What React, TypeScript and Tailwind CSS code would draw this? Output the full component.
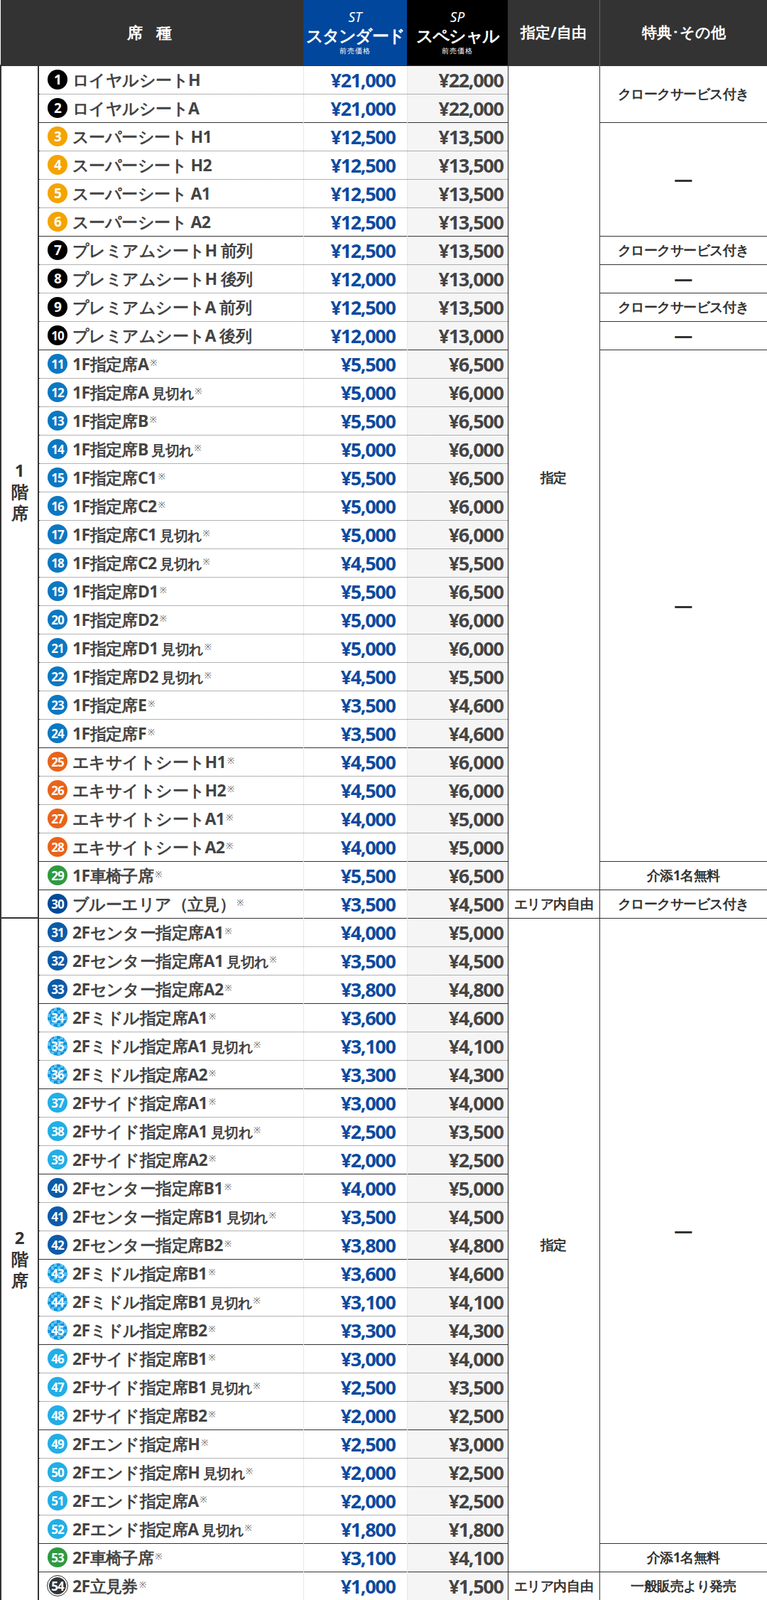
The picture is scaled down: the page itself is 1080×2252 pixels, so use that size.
type Row = { n: number; name: string; sub?: string; st: string; sp: string; c: string; g?: boolean };

const BK = "bg-black";
const OR = "bg-[#f4a400]";
const MB = "bg-[#0b78c2]";
const RD = "bg-[#e8641a]";
const GR = "bg-[#2e9a3f]";
const DB = "bg-[#0c5ba8]";
const CK = "bg-[repeating-conic-gradient(#1592dc_0_25%,#5cc4f2_0_50%)] bg-[length:9px_9px]";
const CY = "bg-[#22aee6]";

const rows: Row[] = [
  { n: 1, name: "ロイヤルシートH", st: "21,000", sp: "22,000", c: BK, g: true },
  { n: 2, name: "ロイヤルシートA", st: "21,000", sp: "22,000", c: BK },
  { n: 3, name: "スーパーシート H1", st: "12,500", sp: "13,500", c: OR, g: true },
  { n: 4, name: "スーパーシート H2", st: "12,500", sp: "13,500", c: OR },
  { n: 5, name: "スーパーシート A1", st: "12,500", sp: "13,500", c: OR },
  { n: 6, name: "スーパーシート A2", st: "12,500", sp: "13,500", c: OR },
  { n: 7, name: "プレミアムシートH 前列", st: "12,500", sp: "13,500", c: BK, g: true },
  { n: 8, name: "プレミアムシートH 後列", st: "12,000", sp: "13,000", c: BK },
  { n: 9, name: "プレミアムシートA 前列", st: "12,500", sp: "13,500", c: BK },
  { n: 10, name: "プレミアムシートA 後列", st: "12,000", sp: "13,000", c: BK },
  { n: 11, name: "1F指定席A", sub: "", st: "5,500", sp: "6,500", c: MB, g: true },
  { n: 12, name: "1F指定席A 見切れ", sub: "", st: "5,000", sp: "6,000", c: MB },
  { n: 13, name: "1F指定席B", sub: "", st: "5,500", sp: "6,500", c: MB },
  { n: 14, name: "1F指定席B 見切れ", sub: "", st: "5,000", sp: "6,000", c: MB },
  { n: 15, name: "1F指定席C1", sub: "", st: "5,500", sp: "6,500", c: MB },
  { n: 16, name: "1F指定席C2", sub: "", st: "5,000", sp: "6,000", c: MB },
  { n: 17, name: "1F指定席C1 見切れ", sub: "", st: "5,000", sp: "6,000", c: MB },
  { n: 18, name: "1F指定席C2 見切れ", sub: "", st: "4,500", sp: "5,500", c: MB },
  { n: 19, name: "1F指定席D1", sub: "", st: "5,500", sp: "6,500", c: MB },
  { n: 20, name: "1F指定席D2", sub: "", st: "5,000", sp: "6,000", c: MB },
  { n: 21, name: "1F指定席D1 見切れ", sub: "", st: "5,000", sp: "6,000", c: MB },
  { n: 22, name: "1F指定席D2 見切れ", sub: "", st: "4,500", sp: "5,500", c: MB },
  { n: 23, name: "1F指定席E", sub: "", st: "3,500", sp: "4,600", c: MB },
  { n: 24, name: "1F指定席F", sub: "", st: "3,500", sp: "4,600", c: MB },
  { n: 25, name: "エキサイトシートH1", sub: "", st: "4,500", sp: "6,000", c: RD, g: true },
  { n: 26, name: "エキサイトシートH2", sub: "", st: "4,500", sp: "6,000", c: RD },
  { n: 27, name: "エキサイトシートA1", sub: "", st: "4,000", sp: "5,000", c: RD },
  { n: 28, name: "エキサイトシートA2", sub: "", st: "4,000", sp: "5,000", c: RD },
  { n: 29, name: "1F車椅子席", sub: "", st: "5,500", sp: "6,500", c: GR, g: true },
  { n: 30, name: "ブルーエリア（立見）", sub: "", st: "3,500", sp: "4,500", c: "bg-[#004a98]", g: true },
  { n: 31, name: "2Fセンター指定席A1", sub: "", st: "4,000", sp: "5,000", c: DB, g: true },
  { n: 32, name: "2Fセンター指定席A1 見切れ", sub: "", st: "3,500", sp: "4,500", c: DB },
  { n: 33, name: "2Fセンター指定席A2", sub: "", st: "3,800", sp: "4,800", c: DB },
  { n: 34, name: "2Fミドル指定席A1", sub: "", st: "3,600", sp: "4,600", c: CK, g: true },
  { n: 35, name: "2Fミドル指定席A1 見切れ", sub: "", st: "3,100", sp: "4,100", c: CK },
  { n: 36, name: "2Fミドル指定席A2", sub: "", st: "3,300", sp: "4,300", c: CK },
  { n: 37, name: "2Fサイド指定席A1", sub: "", st: "3,000", sp: "4,000", c: CY, g: true },
  { n: 38, name: "2Fサイド指定席A1 見切れ", sub: "", st: "2,500", sp: "3,500", c: CY },
  { n: 39, name: "2Fサイド指定席A2", sub: "", st: "2,000", sp: "2,500", c: CY },
  { n: 40, name: "2Fセンター指定席B1", sub: "", st: "4,000", sp: "5,000", c: DB, g: true },
  { n: 41, name: "2Fセンター指定席B1 見切れ", sub: "", st: "3,500", sp: "4,500", c: DB },
  { n: 42, name: "2Fセンター指定席B2", sub: "", st: "3,800", sp: "4,800", c: DB },
  { n: 43, name: "2Fミドル指定席B1", sub: "", st: "3,600", sp: "4,600", c: CK, g: true },
  { n: 44, name: "2Fミドル指定席B1 見切れ", sub: "", st: "3,100", sp: "4,100", c: CK },
  { n: 45, name: "2Fミドル指定席B2", sub: "", st: "3,300", sp: "4,300", c: CK },
  { n: 46, name: "2Fサイド指定席B1", sub: "", st: "3,000", sp: "4,000", c: CY, g: true },
  { n: 47, name: "2Fサイド指定席B1 見切れ", sub: "", st: "2,500", sp: "3,500", c: CY },
  { n: 48, name: "2Fサイド指定席B2", sub: "", st: "2,000", sp: "2,500", c: CY },
  { n: 49, name: "2Fエンド指定席H", sub: "", st: "2,500", sp: "3,000", c: CY, g: true },
  { n: 50, name: "2Fエンド指定席H 見切れ", sub: "", st: "2,000", sp: "2,500", c: CY },
  { n: 51, name: "2Fエンド指定席A", sub: "", st: "2,000", sp: "2,500", c: CY },
  { n: 52, name: "2Fエンド指定席A 見切れ", sub: "", st: "1,800", sp: "1,800", c: CY },
  { n: 53, name: "2F車椅子席", sub: "", st: "3,100", sp: "4,100", c: GR, g: true },
  { n: 54, name: "2F立見券", sub: "", st: "1,000", sp: "1,500", c: "bg-[#333] ring-2 ring-inset ring-white outline outline-1 outline-[#333]", g: true },
];

// 指定/自由 column: rowSpan and text keyed by first row
const zoneCells: Record<number, [number, string]> = { 1: [29, "指定"], 30: [1, "エリア内自由"], 31: [23, "指定"], 54: [1, "エリア内自由"] };
const perkCells: Record<number, [number, string]> = {
  1: [2, "クロークサービス付き"], 3: [4, "–"], 7: [1, "クロークサービス付き"], 8: [1, "–"],
  9: [1, "クロークサービス付き"], 10: [1, "–"], 11: [18, "–"], 29: [1, "介添1名無料"],
  30: [1, "クロークサービス付き"], 31: [22, "–"], 53: [1, "介添1名無料"], 54: [1, "一般販売より発売"],
};

const font = "font-['Roboto','Noto_Sans_CJK_JP',sans-serif]";

function Side({ text }: { text: string }) {
  const big = text === "–";
  return <span className={big ? "text-[26px] font-bold text-[#333] leading-none" : "text-[19px] font-bold text-[#333] tracking-tight leading-none whitespace-nowrap"}>{big ? "—" : text}</span>;
}

export default function App() {
  return (
    <div className={`w-[1080px] bg-white ${font}`}>
      <table className="w-[1080px] table-fixed border-collapse">
        <colgroup>
          <col className="w-[53px]" />
          <col className="w-[373px]" />
          <col className="w-[146px]" />
          <col className="w-[142px]" />
          <col className="w-[129px]" />
          <col className="w-[237px]" />
        </colgroup>
        <thead>
          <tr className="h-[92px] text-white">
            <th colSpan={2} className="bg-[#333] text-[22px] font-bold tracking-[0.3em] p-0">席 種</th>
            <th className="bg-[#00479d] leading-none p-0 whitespace-nowrap">
              <div className="text-[19px] italic font-normal">ST</div>
              <div className="text-[24px] font-bold tracking-[-0.08em] mt-1">スタンダード</div>
              <div className="text-[10px] font-normal mt-1 tracking-widest">前売価格</div>
            </th>
            <th className="bg-black leading-none p-0 whitespace-nowrap">
              <div className="text-[19px] italic font-normal">SP</div>
              <div className="text-[24px] font-bold tracking-[-0.08em] mt-1">スペシャル</div>
              <div className="text-[10px] font-normal mt-1 tracking-widest">前売価格</div>
            </th>
            <th className="bg-[#333] text-[21px] font-bold border-r border-[#666] p-0">指定/自由</th>
            <th className="bg-[#333] text-[21px] font-bold p-0">特典･その他</th>
          </tr>
        </thead>
        <tbody>
          {rows.map((r, i) => {
            const top = r.g ? "border-t border-t-[#333]" : "border-t border-t-[#666] [border-top-style:dotted]!";
            const parts = r.name.split(" 見切れ");
            return (
              <tr key={r.n} className="h-[40px] leading-none">
                {i === 0 && (
                  <td rowSpan={30} className="border-2 border-[#333] text-center align-middle text-[24px] font-bold text-[#333] leading-tight p-0">
                    <div>1</div><div>階</div><div>席</div>
                  </td>
                )}
                {i === 30 && (
                  <td rowSpan={24} className="border-2 border-[#333] text-center align-middle text-[24px] font-bold text-[#333] leading-tight p-0">
                    <div>2</div><div>階</div><div>席</div>
                  </td>
                )}
                <td className={`${top} pl-3 p-0 whitespace-nowrap`}>
                  <div className="flex items-center gap-[7px] h-[39px]">
                    <span className={`${r.c} shrink-0 w-[28px] h-[28px] rounded-full flex items-center justify-center text-white font-bold tracking-tighter ${r.n > 9 ? "text-[17px]" : "text-[19px]"}`}>{r.n}</span>
                    <span className="text-[23px] font-bold text-[#444] tracking-tight">
                      {parts[0]}
                      {parts.length > 1 && <span className="text-[20px]"> 見切れ</span>}
                      {r.sub !== undefined && <sup className="text-[12px] font-normal text-[#666] ml-0.5">※</sup>}
                    </span>
                  </div>
                </td>
                <td className={`${top} p-0 border-l border-l-[#e8e8e8] text-right pr-4 text-[27px] font-bold text-[#0c4aa0] tracking-tighter`}>¥{r.st}</td>
                <td className={`${top} p-0 border-l border-l-[#e8e8e8] bg-[#f5f5f5] text-right pr-[6px] text-[27px] font-bold text-[#444] tracking-tighter`}>¥{r.sp}</td>
                {zoneCells[r.n] && (
                  <td rowSpan={zoneCells[r.n][0]} className="border border-[#333] text-center align-middle p-0">
                    <Side text={zoneCells[r.n][1]} />
                  </td>
                )}
                {perkCells[r.n] && (
                  <td rowSpan={perkCells[r.n][0]} className="border border-[#333] border-r-2 text-center align-middle p-0">
                    <Side text={perkCells[r.n][1]} />
                  </td>
                )}
              </tr>
            );
          })}
          <tr><td colSpan={6} className="border-t-2 border-[#333] h-0 p-0" /></tr>
        </tbody>
      </table>
    </div>
  );
}
